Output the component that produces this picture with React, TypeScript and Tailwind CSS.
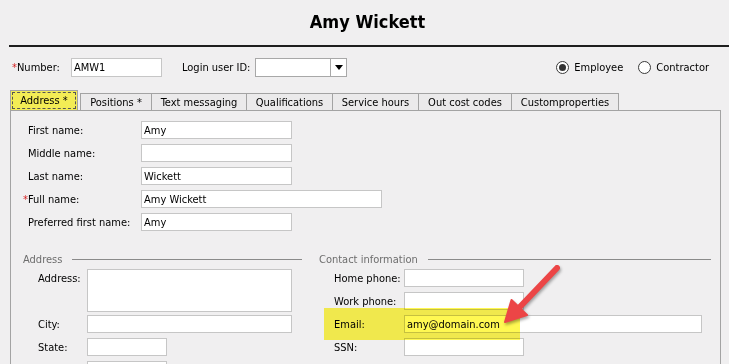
import React from "react"

const font = { fontFamily: '"DejaVu Sans Condensed", "Liberation Sans", Arial, sans-serif' }

function Field({ value = "", w }: { value?: string; w: string }) {
  return (
    <input
      readOnly
      value={value}
      className={`h-[18px] ${w} border border-[#c6c6c6] bg-white px-[2px] text-[11px] leading-[16px] text-black outline-none`}
    />
  )
}

function Row({ label, req, value, w, labelW }: { label: string; req?: boolean; value?: string; w: string; labelW: string }) {
  return (
    <div className="flex h-[18px] items-center">
      <div className={`${labelW} flex items-center text-[11px] leading-none`}>
        {req && <span className="-ml-[5px] text-[#d42020]">*</span>}
        {label}
      </div>
      <Field value={value} w={w} />
    </div>
  )
}

function Radio({ checked, label }: { checked?: boolean; label: string }) {
  return (
    <div className="flex items-center gap-[5px] text-[11px] leading-none">
      <span className="flex h-[13px] w-[13px] items-center justify-center rounded-full border border-[#3a3a3a] bg-white">
        {checked && <span className="h-[7px] w-[7px] rounded-full bg-[#333]" />}
      </span>
      {label}
    </div>
  )
}

const tabs = [
  { name: "Positions *", w: "w-[71px]" },
  { name: "Text messaging", w: "w-[95px]" },
  { name: "Qualifications", w: "w-[86px]" },
  { name: "Service hours", w: "w-[86px]" },
  { name: "Out cost codes", w: "w-[93px]" },
  { name: "Customproperties", w: "w-[108px]" },
]

export default function App() {
  return (
    <div className="relative h-[364px] w-[729px] overflow-hidden bg-[#f0eff0] text-black" style={font}>
      <h1 className="h-[45px] pt-[11px] pl-[6px] text-center text-[18px] font-bold leading-[22px]">Amy Wickett</h1>
      <div className="ml-[9px] h-[2px] bg-[#1e1e1e]" />

      {/* number / login row */}
      <div className="mt-[10px] flex h-[20px] items-center pl-[12px] pr-[20px] text-[11px] leading-none">
        <div className="w-[59px]">
          <span className="text-[#d42020]">*</span>Number:
        </div>
        <input readOnly value="AMW1" className="h-[19px] w-[91px] border border-[#c6c6c6] bg-white px-[2px] text-[11px] outline-none" />
        <div className="ml-[20px] w-[73px]">Login user ID:</div>
        <div className="flex h-[19px] w-[92px] border border-[#a8a8a8] bg-white">
          <div className="flex-1" />
          <div className="flex w-[16px] items-center justify-center border-l border-[#a8a8a8] bg-white">
            <svg width="8" height="5" viewBox="0 0 8 5">
              <path d="M0 0h8L4 5z" fill="#000" />
            </svg>
          </div>
        </div>
        <div className="ml-auto flex items-center gap-[15px]">
          <Radio checked label="Employee" />
          <Radio label="Contractor" />
        </div>
      </div>

      {/* tabs */}
      <div className="mt-[13px] ml-[10px] flex h-[20px] items-end text-[11px] leading-none">
        <div className="flex h-[20px] w-[68px] items-center justify-center border-x border-t border-[#a3a3a3] bg-[#f3ec55] p-[1px]">
          <div className="flex h-full w-full items-center justify-center border border-dashed border-[#555]">Address *</div>
        </div>
        <div className="ml-[2px] flex">
          {tabs.map((t, i) => (
            <div
              key={t.name}
              className={`flex h-[17px] ${t.w} items-center justify-center border-t border-l border-[#a3a3a3] bg-[#ebeaeb] ${i === tabs.length - 1 ? "border-r" : ""}`}
            >
              {t.name}
            </div>
          ))}
        </div>
      </div>

      {/* panel */}
      <div className="ml-[10px] w-[711px] border-x border-t border-[#a3a3a3] pt-[10px] pb-[20px]">
        <div className="flex flex-col gap-[5px] pl-[17px]">
          <Row label="First name:" value="Amy" w="w-[151px]" labelW="w-[113px]" />
          <Row label="Middle name:" w="w-[151px]" labelW="w-[113px]" />
          <Row label="Last name:" value="Wickett" w="w-[151px]" labelW="w-[113px]" />
          <Row label="Full name:" req value="Amy Wickett" w="w-[241px]" labelW="w-[113px]" />
          <Row label="Preferred first name:" value="Amy" w="w-[151px]" labelW="w-[113px]" />
        </div>

        <div className="mt-[22px] flex text-[11px] leading-none">
          {/* address group */}
          <div className="ml-[12px] w-[279px]">
            <div className="flex h-[12px] items-center">
              <span className="text-[#6d6d6d]">Address</span>
              <div className="ml-[10px] h-px flex-1 bg-[#8a8a8a]" />
            </div>
            <div className="mt-[4px] flex flex-col gap-[3px] pl-[15px]">
              <div className="flex items-start">
                <div className="flex h-[18px] w-[49px] items-center">Address:</div>
                <textarea readOnly className="h-[43px] w-[205px] resize-none border border-[#c6c6c6] bg-white outline-none" />
              </div>
              <div className="flex flex-col gap-[5px]">
                <Row label="City:" w="w-[205px]" labelW="w-[49px]" />
                <Row label="State:" w="w-[80px]" labelW="w-[49px]" />
                <Row label="" w="w-[80px]" labelW="w-[49px]" />
              </div>
            </div>
          </div>

          {/* contact group */}
          <div className="ml-[17px] w-[392px]">
            <div className="flex h-[12px] items-center">
              <span className="text-[#6d6d6d]">Contact information</span>
              <div className="ml-[10px] h-px flex-1 bg-[#8a8a8a]" />
            </div>
            <div className="mt-[4px] flex flex-col gap-[5px] pl-[15px]">
              <Row label="Home phone:" w="w-[120px]" labelW="w-[70px]" />
              <Row label="Work phone:" w="w-[120px]" labelW="w-[70px]" />
              <Row label="Email:" value="amy@domain.com" w="w-[298px]" labelW="w-[70px]" />
              <Row label="SSN:" w="w-[120px]" labelW="w-[70px]" />
            </div>
          </div>
        </div>
      </div>

      {/* highlight over email row */}
      <div className="pointer-events-none absolute left-[324px] top-[308px] h-[32px] w-[196px] bg-[#fff852] mix-blend-multiply" />

      {/* red arrow */}
      <svg className="pointer-events-none absolute left-0 top-0 drop-shadow-[1px_2px_1.5px_rgba(0,0,0,0.35)]" width="729" height="364">
        <line x1="557" y1="268" x2="516" y2="311" stroke="#ec4546" strokeWidth="6" strokeLinecap="round" />
        <path d="M505 322 L511.5 300 L527 315 Z" fill="#ec4546" stroke="#ec4546" strokeWidth="2" strokeLinejoin="round" />
      </svg>
    </div>
  )
}
